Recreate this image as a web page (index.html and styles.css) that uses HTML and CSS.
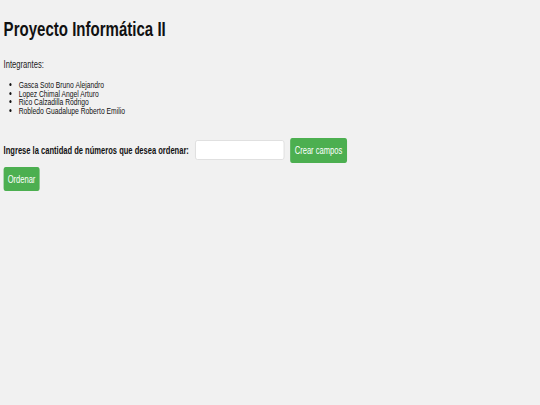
FILE: index.html
```html
<!DOCTYPE html>
<html lang="es">
<head>
<meta charset="utf-8">
<title>Proyecto Informática II</title>
<link rel="stylesheet" href="styles.css">
</head>
<body>
<div class="page">
  <h1 class="title">Proyecto Informática II</h1>
  <p class="intro">Integrantes:</p>
  <ul class="members">
    <li>Gasca Soto Bruno Alejandro</li>
    <li>Lopez Chimal Angel Arturo</li>
    <li>Rico Calzadilla Rodrigo</li>
    <li>Robledo Guadalupe Roberto Emilio</li>
  </ul>
  <div class="form-row">
    <label class="label" for="cantidad">Ingrese la cantidad de números que desea ordenar:</label>
    <input class="field" id="cantidad" type="number">
    <button class="btn" type="button">Crear campos</button>
  </div>
  <div class="actions">
    <button class="btn btn-small" type="button">Ordenar</button>
  </div>
</div>
</body>
</html>
```

FILE: styles.css
```css
html, body {
  margin: 0;
  padding: 0;
  background: #f1f1f1;
  height: 100%;
  overflow: hidden;
}
body {
  font-family: "Liberation Sans", Arial, sans-serif;
  color: #1a1a1a;
}
.page {
  padding: 16.8px 0 0 5px;
  transform: scaleX(0.72);
  transform-origin: 0 0;
}
.title {
  margin: 0;
  font-size: 20.9px;
  line-height: 24px;
  font-weight: bold;
  color: #111;
}
.intro {
  margin: 17.3px 0 0;
  font-size: 10.6px;
  line-height: 12px;
}
.members {
  margin: 11.2px 0 0;
  padding-left: 21px;
  font-size: 9.4px;
  line-height: 8.4px;
  color: #111;
}
.form-row {
  margin-top: 22.8px;
  display: flex;
  align-items: center;
  gap: 8.3px;
}
.label {
  font-size: 10.5px;
  line-height: 12px;
  font-weight: bold;
  color: #111;
}
.field {
  width: 124px;
  height: 20px;
  box-sizing: border-box;
  border: 1px solid #dcdcdc;
  border-radius: 3px;
  background: #fff;
  margin: 0;
  padding: 0 4px;
}
.actions {
  margin-top: 4px;
  display: flex;
}
.btn {
  font-family: "Liberation Sans", Arial, sans-serif;
  font-size: 10.5px;
  line-height: 12px;
  height: 25px;
  padding: 0 6.4px;
  margin: 0;
  border: none;
  border-radius: 3px;
  background: #4caf50;
  color: #fff;
}
.btn-small {
  height: 24px;
  padding: 0 5.6px;
}
```
